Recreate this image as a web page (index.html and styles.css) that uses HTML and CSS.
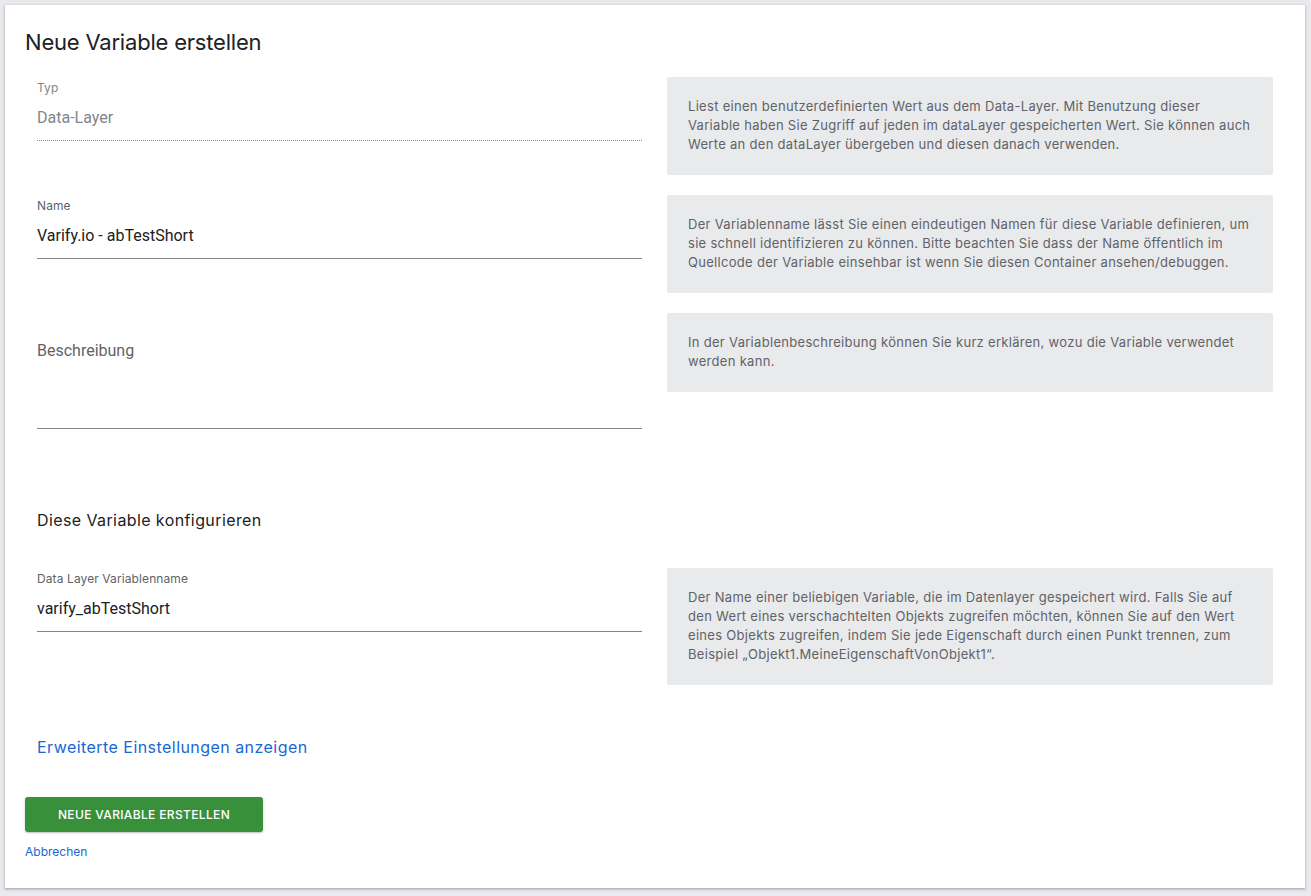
FILE: index.html
```html
<!DOCTYPE html>
<html lang="de">
<head>
<meta charset="utf-8">
<title>Neue Variable erstellen</title>
<link rel="stylesheet" href="styles.css">
</head>
<body>
<div class="card">
  <h1 class="title">Neue Variable erstellen</h1>

  <div class="row">
    <div class="field field-disabled">
      <div class="label label-disabled">Typ</div>
      <div class="value value-disabled">Data-Layer</div>
    </div>
    <div class="help">Liest einen benutzerdefinierten Wert aus dem Data-Layer. Mit Benutzung dieser Variable haben Sie Zugriff auf jeden im dataLayer gespeicherten Wert. Sie können auch Werte an den dataLayer übergeben und diesen danach verwenden.</div>
  </div>

  <div class="row">
    <div class="field">
      <div class="label">Name</div>
      <div class="value">Varify.io - abTestShort</div>
    </div>
    <div class="help">Der Variablenname lässt Sie einen eindeutigen Namen für diese Variable definieren, um sie schnell identifizieren zu können. Bitte beachten Sie dass der Name öffentlich im Quellcode der Variable einsehbar ist wenn Sie diesen Container ansehen/debuggen.</div>
  </div>

  <div class="row">
    <div class="field textarea">
      <div class="placeholder">Beschreibung</div>
    </div>
    <div class="help">In der Variablenbeschreibung können Sie kurz erklären, wozu die Variable verwendet werden kann.</div>
  </div>

  <h2 class="section">Diese Variable konfigurieren</h2>

  <div class="row">
    <div class="field">
      <div class="label">Data Layer Variablenname</div>
      <div class="value">varify_abTestShort</div>
    </div>
    <div class="help">Der Name einer beliebigen Variable, die im Datenlayer gespeichert wird. Falls Sie auf den Wert eines verschachtelten Objekts zugreifen möchten, können Sie auf den Wert eines Objekts zugreifen, indem Sie jede Eigenschaft durch einen Punkt trennen, zum Beispiel „Objekt1.MeineEigenschaftVonObjekt1“.</div>
  </div>

  <a class="advanced" href="#">Erweiterte Einstellungen anzeigen</a>

  <div class="actions">
    <button class="primary" type="button">Neue Variable erstellen</button>
    <a class="cancel" href="#">Abbrechen</a>
  </div>
</div>
</body>
</html>
```

FILE: styles.css
```css
html, body {
  margin: 0;
  padding: 0;
}
body {
  background: #e8eaed;
  padding: 5px 6px 8px 5px;
  font-family: Inter, "Liberation Sans", Arial, sans-serif;
  color: #202124;
}
.card {
  background: #fff;
  box-shadow: 0 1px 2px rgba(60,64,67,0.3), 0 1px 3px 1px rgba(60,64,67,0.12);
  padding: 23px 20px 28px 20px;
}
.title {
  margin: 0 0 21px 0;
  font-size: 22px;
  line-height: 28px;
  font-weight: 400;
  letter-spacing: -0.2px;
  color: #202124;
}
.row {
  display: grid;
  grid-template-columns: 605px 606px;
  column-gap: 25px;
  margin-left: 12px;
  margin-bottom: 20px;
  align-items: start;
}
.field {
  border-bottom: 1px solid #80868b;
  padding-bottom: 10px;
}
.field-disabled {
  border-bottom: 1px dotted #80868b;
}
.label {
  font-size: 12px;
  line-height: 20px;
  letter-spacing: 0.1px;
  color: #5f6368;
  padding-top: 1px;
  margin-bottom: -1px;
}
.label-disabled {
  color: #80868b;
}
.value {
  font-family: Roboto, "Liberation Sans", Arial, sans-serif;
  font-size: 16px;
  line-height: 24px;
  margin-top: 9px;
  color: #202124;
}
.value-disabled {
  color: #80868b;
}
.textarea {
  padding-top: 26px;
  padding-bottom: 65px;
}
.placeholder {
  font-family: Roboto, "Liberation Sans", Arial, sans-serif;
  font-size: 16px;
  line-height: 24px;
  color: #5f6368;
}
.help {
  background: #e9eaec;
  border-radius: 2px;
  padding: 20px 21px 21px 21px;
  font-size: 13px;
  line-height: 19px;
  letter-spacing: 0.3px;
  color: #5f6368;
}
.section {
  margin: 79px 0 36px 12px;
  font-size: 16px;
  line-height: 24px;
  font-weight: 400;
  letter-spacing: 0.4px;
  color: #202124;
}
.advanced {
  display: block;
  margin: 50px 0 0 12px;
  font-size: 16px;
  line-height: 24px;
  letter-spacing: 0.45px;
  color: #1967d2;
  text-decoration: none;
  width: max-content;
}
.actions {
  margin-top: 38px;
  display: flex;
  flex-direction: column;
  align-items: flex-start;
  gap: 12px;
}
.primary {
  width: 238px;
  height: 35px;
  background: #38913a;
  color: #fff;
  border: none;
  border-radius: 3px;
  box-shadow: 0 1px 2px rgba(0,0,0,0.25);
  font-family: inherit;
  font-size: 12px;
  font-weight: 500;
  letter-spacing: 0.35px;
  text-transform: uppercase;
  cursor: pointer;
}
.cancel {
  font-size: 12px;
  line-height: 16px;
  color: #1967d2;
  text-decoration: none;
}
```
